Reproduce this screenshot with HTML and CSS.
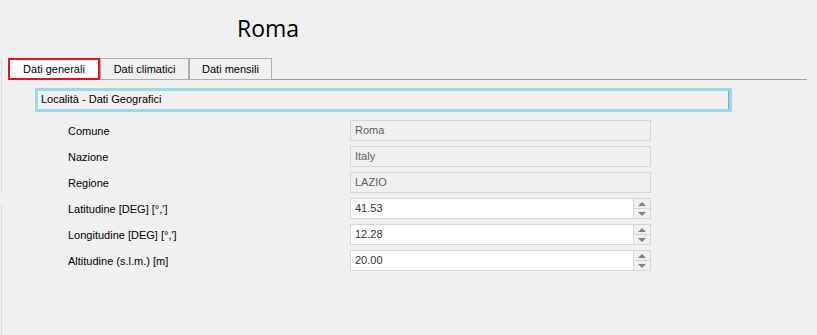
FILE: index.html
```html
<!DOCTYPE html>
<html lang="it">
<head>
  <meta charset="UTF-8" />
  <title>Roma</title>
  <link rel="stylesheet" href="styles.css">
</head>
<body>
  <div class="window">
    <h1 class="title">Roma</h1>

    <div class="tabs">
      <div class="tab active">Dati generali</div>
      <div class="tab">Dati climatici</div>
      <div class="tab">Dati mensili</div>
      <div class="tab-rest"></div>
    </div>

    <div class="page">
      <div class="group-header">
        <div class="group-inner">Località - Dati Geografici</div>
      </div>

      <div class="rows">
        <div class="row">
          <span class="label">Comune</span>
          <div class="field readonly">Roma</div>
        </div>
        <div class="row">
          <span class="label">Nazione</span>
          <div class="field readonly">Italy</div>
        </div>
        <div class="row">
          <span class="label">Regione</span>
          <div class="field readonly">LAZIO</div>
        </div>
        <div class="row">
          <span class="label">Latitudine [DEG] [°,']</span>
          <div class="field spin">
            <span class="value">41.53</span>
            <div class="spin-buttons">
              <div class="spin-btn"><span class="arrow up"></span></div>
              <div class="spin-btn"><span class="arrow down"></span></div>
            </div>
          </div>
        </div>
        <div class="row">
          <span class="label">Longitudine [DEG] [°,']</span>
          <div class="field spin">
            <span class="value">12.28</span>
            <div class="spin-buttons">
              <div class="spin-btn"><span class="arrow up"></span></div>
              <div class="spin-btn"><span class="arrow down"></span></div>
            </div>
          </div>
        </div>
        <div class="row">
          <span class="label">Altitudine (s.l.m.) [m]</span>
          <div class="field spin">
            <span class="value">20.00</span>
            <div class="spin-buttons">
              <div class="spin-btn"><span class="arrow up"></span></div>
              <div class="spin-btn"><span class="arrow down"></span></div>
            </div>
          </div>
        </div>
      </div>
    </div>
  </div>
</body>
</html>
```

FILE: styles.css
```css
html, body {
  margin: 0;
  padding: 0;
  background-color: #f0f0f0;
}

body {
  width: 817px;
  height: 335px;
  overflow: hidden;
  font-family: "Liberation Sans", Arial, sans-serif;
  font-size: 11px;
  color: #000;
}

.window {
  height: 335px;
  /* thin panel edge on the left, with a gap */
  background-image: linear-gradient(to bottom,
    transparent 58px, #d9d9d9 58px, #d9d9d9 191px,
    transparent 191px, transparent 205px, #d9d9d9 205px);
  background-size: 1px 100%;
  background-position: 1px 0;
  background-repeat: no-repeat;
}

.title {
  margin: 0;
  width: 536px;
  height: 58px;
  padding-top: 12px;
  box-sizing: border-box;
  text-align: center;
  font-family: "Open Sans", sans-serif;
  font-weight: normal;
  font-size: 23px;
  line-height: 32px;
  color: #000;
}

.tabs {
  display: flex;
  height: 22px;
  padding-left: 8px;
  width: 799px;
}

.tab {
  box-sizing: border-box;
  height: 22px;
  border: 1px solid #adadad;
  background: #f0f0f0;
  display: flex;
  align-items: center;
  justify-content: center;
  color: #000;
}

.tab:nth-child(2) { width: 89px; }
.tab:nth-child(3) { width: 83px; }

.tab.active {
  width: 92px;
  background: #fff;
  border: 2px solid #e81123;
}

.tab-rest {
  flex: 1;
  border-bottom: 1px solid #a0a0a0;
}

.page {
  padding-top: 8px;
}

.group-header {
  margin-left: 35px;
  width: 697px;
  height: 24px;
  box-sizing: border-box;
  border: 3px solid #99d9ea;
}

.group-inner {
  height: 18px;
  box-sizing: border-box;
  border-left: 1px solid #f8f8f8;
  border-right: 1px solid #a0a0a0;
  padding-left: 2px;
  line-height: 17px;
  width: 691px;
}

.rows {
  display: flex;
  flex-direction: column;
  gap: 5px;
  padding-top: 8px;
}

.row {
  display: flex;
  align-items: center;
  height: 21px;
}

.label {
  width: 282px;
  padding-left: 68px;
}

.field {
  box-sizing: border-box;
  width: 301px;
  height: 21px;
  border: 1px solid #d6d6d6;
  padding-left: 4px;
  line-height: 19px;
}

.field.readonly {
  background: #f0f0f0;
  color: #5e5e5e;
}

.field.spin {
  background: #fff;
  color: #333;
  display: flex;
}

.value {
  flex: 1;
}

.spin-buttons {
  width: 16px;
  display: flex;
  flex-direction: column;
  border-left: 1px solid #d6d6d6;
}

.spin-btn {
  flex: 1;
  background: #f0f0f0;
  display: flex;
  align-items: center;
  justify-content: center;
}

.spin-btn + .spin-btn {
  border-top: 1px solid #d6d6d6;
}

.arrow {
  width: 0;
  height: 0;
  border-left: 4px solid transparent;
  border-right: 4px solid transparent;
}

.arrow.up { border-bottom: 4px solid #808080; }
.arrow.down { border-top: 4px solid #808080; }
```
